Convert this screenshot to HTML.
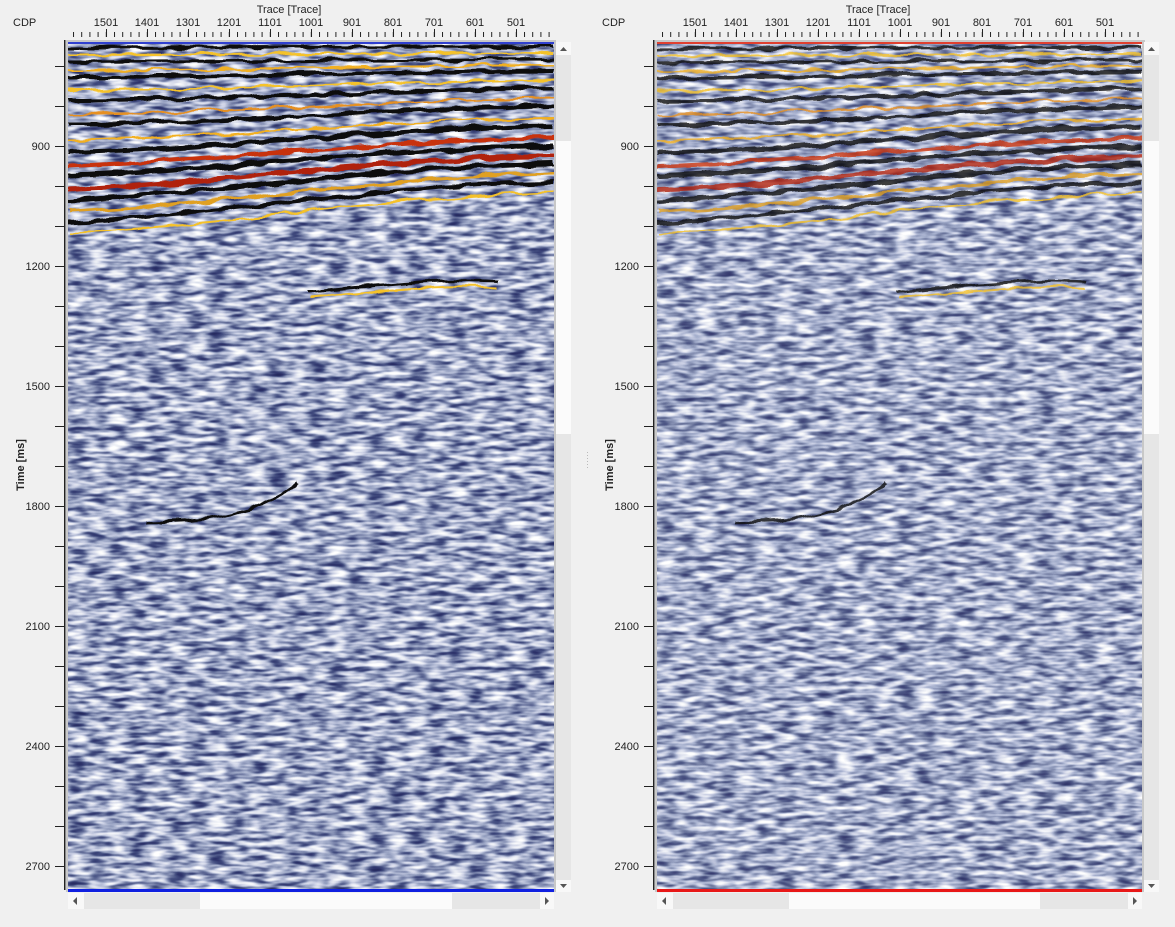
<!DOCTYPE html>
<html><head><meta charset="utf-8"><style>
html,body{margin:0;padding:0;background:#f0f0f0;width:1175px;height:927px;overflow:hidden}
svg{display:block}
text{font-family:"Liberation Sans",sans-serif;font-size:11px;fill:#222}
</style></head><body>
<svg width="1175" height="927" viewBox="0 0 1175 927" xmlns="http://www.w3.org/2000/svg">
<defs>
<filter id="nz" x="0" y="0" width="100%" height="100%" color-interpolation-filters="sRGB">
 <feTurbulence type="fractalNoise" baseFrequency="0.05 0.2" numOctaves="2" seed="4"/>
 <feColorMatrix type="matrix" values="1 0 0 0 0 1 0 0 0 0 1 0 0 0 0 0 0 0 0 1"/>
 <feComponentTransfer>
  <feFuncR type="table" tableValues="0.12 0.14 0.18 0.26 0.44 0.62 0.8 0.92 1 1 1"/>
  <feFuncG type="table" tableValues="0.14 0.16 0.2 0.3 0.48 0.66 0.82 0.93 1 1 1"/>
  <feFuncB type="table" tableValues="0.34 0.36 0.42 0.5 0.64 0.78 0.9 0.96 1 1 1"/>
  <feFuncA type="table" tableValues="1 1"/>
 </feComponentTransfer>
</filter>
<filter id="nz2" x="0" y="0" width="100%" height="100%" color-interpolation-filters="sRGB">
 <feTurbulence type="fractalNoise" baseFrequency="0.05 0.2" numOctaves="2" seed="9"/>
 <feColorMatrix type="matrix" values="1 0 0 0 0 1 0 0 0 0 1 0 0 0 0 0 0 0 0 1"/>
 <feComponentTransfer>
  <feFuncR type="table" tableValues="0.16 0.18 0.24 0.32 0.48 0.64 0.8 0.92 1 1 1"/>
  <feFuncG type="table" tableValues="0.18 0.2 0.26 0.36 0.52 0.68 0.82 0.93 1 1 1"/>
  <feFuncB type="table" tableValues="0.38 0.4 0.46 0.54 0.66 0.8 0.9 0.96 1 1 1"/>
  <feFuncA type="table" tableValues="1 1"/>
 </feComponentTransfer>
</filter>
<filter id="wv" x="-5%" y="-5%" width="110%" height="110%">
 <feTurbulence type="fractalNoise" baseFrequency="0.04 0.08" numOctaves="2" seed="7" result="t"/>
 <feDisplacementMap in="SourceGraphic" in2="t" scale="8" xChannelSelector="R" yChannelSelector="G"/>
</filter>
<pattern id="tkx" x="73" y="0" width="8.2" height="10" patternUnits="userSpaceOnUse"><rect x="0" y="0" width="1" height="10" fill="#222"/></pattern>
<pattern id="tky" x="0" y="66" width="10" height="40" patternUnits="userSpaceOnUse"><rect x="0" y="0" width="10" height="1" fill="#222"/></pattern>
<g id="bands" fill="none" filter="url(#wv)">
 <path d="M0,6 C160,6 320,6 486,5" stroke="#111" stroke-width="3"/>
 <path d="M0,13 C160,13 320,12 486,11" stroke="#f5c22a" stroke-width="2"/>
 <path d="M0,20 C160,20 320,18 486,17" stroke="#111" stroke-width="3"/>
 <path d="M0,28 C160,28 320,24 486,23" stroke="#f2b020" stroke-width="2"/>
 <path d="M0,35 C160,35 320,30 486,29" stroke="#111" stroke-width="4"/>
 <path d="M0,48 C160,48 320,40 486,38" stroke="#f5c22a" stroke-width="2"/>
 <path d="M0,58 C160,58 320,48 486,46" stroke="#111" stroke-width="4"/>
 <path d="M0,72 C160,72 320,58 486,56" stroke="#e69020" stroke-width="2"/>
 <path d="M0,82 C160,82 320,66 486,64" stroke="#111" stroke-width="4"/>
 <path d="M0,98 C160,96 320,78 486,76" stroke="#f2b020" stroke-width="2"/>
 <path d="M0,110 C160,106 320,86 486,84" stroke="#111" stroke-width="5"/>
 <path d="M0,124 C160,118 320,98 486,96" stroke="#c83010" stroke-width="4"/>
 <path d="M0,134 C160,128 320,106 486,104" stroke="#111" stroke-width="5"/>
 <path d="M0,147 C160,140 320,116 486,114" stroke="#b02010" stroke-width="5"/>
 <path d="M0,158 C160,150 320,124 486,122" stroke="#111" stroke-width="5"/>
 <path d="M0,170 C160,162 320,134 486,132" stroke="#e0a020" stroke-width="3"/>
 <path d="M0,180 C160,172 320,142 486,140" stroke="#111" stroke-width="4"/>
 <path d="M0,191 C160,184 320,154 486,150" stroke="#f5c22a" stroke-width="2"/>
 <path d="M240,250 C300,246 360,236 430,240" stroke="#111" stroke-width="3"/>
 <path d="M240,256 C300,252 360,242 430,246" stroke="#f5c22a" stroke-width="2"/>
 <path d="M80,480 C140,478 180,476 230,440" stroke="#111" stroke-width="3"/>
</g>
</defs>

<!-- LEFT PANEL -->
<rect x="66" y="40" width="490" height="852" fill="#c8c8c8"/>
<svg x="68" y="42" width="486" height="848" viewBox="0 0 486 848">
 <rect width="486" height="848" filter="url(#nz)"/>
 <use href="#bands"/>
</svg>
<rect x="68" y="42" width="486" height="2" fill="#3040d0"/>
<rect x="68" y="889" width="486" height="3" fill="#1020e0"/>
<rect x="556" y="42" width="15" height="850" fill="#e6e6e6"/>
<rect x="556" y="42" width="15" height="13" fill="#f8f8f8"/>
<path d="M560,51 L563.5,47 L567,51Z" fill="#555"/>
<rect x="556" y="141" width="15" height="293" fill="#fbfbfb"/>
<rect x="556" y="880" width="15" height="12" fill="#f8f8f8"/>
<path d="M560,884 L567,884 L563.5,888Z" fill="#555"/>
<rect x="68" y="893" width="486" height="16" fill="#e6e6e6"/>
<rect x="68" y="893" width="16" height="16" fill="#f8f8f8"/>
<path d="M77,897 L73,901 L77,905Z" fill="#555"/>
<rect x="200" y="893" width="252" height="16" fill="#fbfbfb"/>
<rect x="540" y="893" width="14" height="16" fill="#f8f8f8"/>
<path d="M545,897 L549,901 L545,905Z" fill="#555"/>
<rect x="73" y="32" width="481" height="5" fill="url(#tkx)"/>
<g fill="#222">
<rect x="106" y="29" width="1" height="8"/><rect x="147" y="29" width="1" height="8"/><rect x="188" y="29" width="1" height="8"/><rect x="229" y="29" width="1" height="8"/><rect x="270" y="29" width="1" height="8"/><rect x="311" y="29" width="1" height="8"/><rect x="352" y="29" width="1" height="8"/><rect x="393" y="29" width="1" height="8"/><rect x="434" y="29" width="1" height="8"/><rect x="475" y="29" width="1" height="8"/><rect x="516" y="29" width="1" height="8"/>
</g>
<rect x="64" y="40" width="1.5" height="850" fill="#222"/>
<rect x="55" y="60" width="10" height="820" fill="url(#tky)"/>
<text x="13" y="26">CDP</text>
<text x="289" y="13" text-anchor="middle" font-size="10">Trace [Trace]</text>
<g text-anchor="middle">
<text x="106" y="26">1501</text><text x="147" y="26">1401</text><text x="188" y="26">1301</text><text x="229" y="26">1201</text><text x="270" y="26">1101</text><text x="311" y="26">1001</text><text x="352" y="26">901</text><text x="393" y="26">801</text><text x="434" y="26">701</text><text x="475" y="26">601</text><text x="516" y="26">501</text>
</g>
<g text-anchor="end">
<text x="50" y="150">900</text><text x="50" y="270">1200</text><text x="50" y="390">1500</text><text x="50" y="510">1800</text><text x="50" y="630">2100</text><text x="50" y="750">2400</text><text x="50" y="870">2700</text>
</g>
<text transform="translate(24,465) rotate(-90)" text-anchor="middle" font-size="10" font-weight="bold">Time [ms]</text>

<!-- RIGHT PANEL -->
<rect x="655" y="40" width="490" height="852" fill="#c8c8c8"/>
<svg x="657" y="42" width="485" height="848" viewBox="0 0 486 848">
 <rect width="486" height="848" filter="url(#nz2)"/>
 <use href="#bands" opacity="0.8"/>
</svg>
<rect x="657" y="42" width="485" height="2" fill="#e04030"/>
<rect x="657" y="889" width="485" height="3" fill="#e81818"/>
<rect x="1144" y="42" width="15" height="850" fill="#e6e6e6"/>
<rect x="1144" y="42" width="15" height="13" fill="#f8f8f8"/>
<path d="M1148,51 L1151.5,47 L1155,51Z" fill="#555"/>
<rect x="1144" y="141" width="15" height="293" fill="#fbfbfb"/>
<rect x="1144" y="880" width="15" height="12" fill="#f8f8f8"/>
<path d="M1148,884 L1155,884 L1151.5,888Z" fill="#555"/>
<rect x="657" y="893" width="485" height="16" fill="#e6e6e6"/>
<rect x="657" y="893" width="16" height="16" fill="#f8f8f8"/>
<path d="M666,897 L662,901 L666,905Z" fill="#555"/>
<rect x="789" y="893" width="251" height="16" fill="#fbfbfb"/>
<rect x="1128" y="893" width="14" height="16" fill="#f8f8f8"/>
<path d="M1133,897 L1137,901 L1133,905Z" fill="#555"/>
<g transform="translate(589,0)">
<rect x="73" y="32" width="480" height="5" fill="url(#tkx)"/>
<g fill="#222">
<rect x="106" y="29" width="1" height="8"/><rect x="147" y="29" width="1" height="8"/><rect x="188" y="29" width="1" height="8"/><rect x="229" y="29" width="1" height="8"/><rect x="270" y="29" width="1" height="8"/><rect x="311" y="29" width="1" height="8"/><rect x="352" y="29" width="1" height="8"/><rect x="393" y="29" width="1" height="8"/><rect x="434" y="29" width="1" height="8"/><rect x="475" y="29" width="1" height="8"/><rect x="516" y="29" width="1" height="8"/>
</g>
<rect x="64" y="40" width="1.5" height="850" fill="#222"/>
<rect x="55" y="60" width="10" height="820" fill="url(#tky)"/>
<text x="13" y="26">CDP</text>
<text x="289" y="13" text-anchor="middle" font-size="10">Trace [Trace]</text>
<g text-anchor="middle">
<text x="106" y="26">1501</text><text x="147" y="26">1401</text><text x="188" y="26">1301</text><text x="229" y="26">1201</text><text x="270" y="26">1101</text><text x="311" y="26">1001</text><text x="352" y="26">901</text><text x="393" y="26">801</text><text x="434" y="26">701</text><text x="475" y="26">601</text><text x="516" y="26">501</text>
</g>
<g text-anchor="end">
<text x="50" y="150">900</text><text x="50" y="270">1200</text><text x="50" y="390">1500</text><text x="50" y="510">1800</text><text x="50" y="630">2100</text><text x="50" y="750">2400</text><text x="50" y="870">2700</text>
</g>
<text transform="translate(24,465) rotate(-90)" text-anchor="middle" font-size="10" font-weight="bold">Time [ms]</text>
</g>
<g fill="#bbb"><rect x="587" y="452" width="1" height="1"/><rect x="587" y="455" width="1" height="1"/><rect x="587" y="458" width="1" height="1"/><rect x="587" y="461" width="1" height="1"/><rect x="587" y="464" width="1" height="1"/><rect x="587" y="467" width="1" height="1"/></g>
</svg>
</body></html>
